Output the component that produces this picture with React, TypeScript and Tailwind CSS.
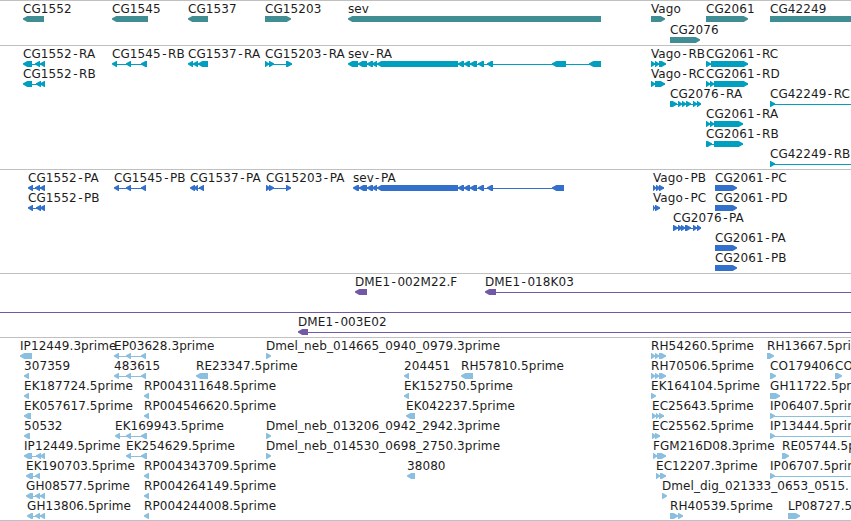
import React from 'react';

type Strand = '<' | '>';
type Exon = [number, number];

interface Feature {
  name?: string;
  row: number;
  strand: Strand;
  exons: Exon[];
  // intron line that runs past the last exon, out of the view
  lineTo?: number;
}

interface Track {
  id: string;
  color: string;
  height: number;
  pitch: number;
  features: Feature[];
}

const VIEW_WIDTH = 851;
const BAR_TOP = 15;
const BAR_HEIGHT = 6;
const HEAD = 5;

const f = (name: string, row: number, strand: Strand, exons: Exon[], lineTo?: number): Feature => ({
  name, row, strand, exons, lineTo,
});

const SEV_TAIL: Exon[] = [[367, 373], [372, 377], [377, 458], [458, 464], [464, 470], [470, 477], [478, 484], [487, 493]];
const CG1545_EST: Exon[] = [[114, 119], [126, 131], [141, 146]];

const TRACKS: Track[] = [
  {
    id: 'genes',
    color: '#408e94',
    height: 45,
    pitch: 21,
    features: [
      f('CG1552', 0, '<', [[23, 44]]),
      f('CG1545', 0, '<', [[112, 148]]),
      f('CG1537', 0, '<', [[188, 208]]),
      f('CG15203', 0, '>', [[265, 291]]),
      f('sev', 0, '<', [[348, 601]]),
      f('Vago', 0, '>', [[651, 665]]),
      f('CG2061', 0, '>', [[706, 748]]),
      f('CG42249', 0, '>', [[770, 870]]),
      f('CG2076', 1, '>', [[670, 700]]),
    ],
  },
  {
    id: 'transcripts',
    color: '#009fc0',
    height: 124,
    pitch: 20,
    features: [
      f('CG1552-RA', 0, '<', [[23, 32], [35, 40], [40, 45]]),
      f('CG1545-RB', 0, '<', [[112, 117], [126, 131], [141, 147]]),
      f('CG1537-RA', 0, '<', [[188, 193], [193, 198], [198, 208]]),
      f('CG15203-RA', 0, '>', [[265, 269], [269, 274], [286, 292]]),
      f('sev-RA', 0, '<', [[348, 358], [358, 367], ...SEV_TAIL, [552, 566], [589, 601]]),
      f('Vago-RB', 0, '>', [[651, 655], [655, 659], [659, 666]]),
      f('CG2061-RC', 0, '>', [[706, 711], [711, 748]]),
      f('CG1552-RB', 1, '<', [[23, 32], [36, 41], [40, 45]]),
      f('Vago-RC', 1, '>', [[651, 655], [655, 665]]),
      f('CG2061-RD', 1, '>', [[706, 710], [710, 714], [714, 748]]),
      f('CG2076-RA', 2, '>', [[670, 677], [678, 682], [682, 686], [686, 691], [693, 697], [697, 701]]),
      f('CG42249-RC', 2, '>', [[770, 775]], VIEW_WIDTH),
      f('CG2061-RA', 3, '>', [[706, 710], [710, 714], [714, 743]]),
      f('CG2061-RB', 4, '>', [[706, 712], [714, 743]]),
      f('CG42249-RB', 5, '>', [[770, 775]], VIEW_WIDTH),
    ],
  },
  {
    id: 'proteins',
    color: '#3370cc',
    height: 104,
    pitch: 20,
    features: [
      f('CG1552-PA', 0, '<', [[28, 33], [35, 40], [40, 45]]),
      f('CG1545-PB', 0, '<', [[114, 119], [126, 131], [141, 146]]),
      f('CG1537-PA', 0, '<', [[190, 195], [194, 198], [199, 204]]),
      f('CG15203-PA', 0, '>', [[266, 270], [269, 274], [286, 291]]),
      f('sev-PA', 0, '<', [[353, 359], [359, 367], ...SEV_TAIL, [552, 564]]),
      f('Vago-PB', 0, '>', [[653, 656], [656, 660], [659, 664]]),
      f('CG2061-PC', 0, '>', [[715, 737]]),
      f('CG1552-PB', 1, '<', [[28, 33], [36, 41], [40, 45]]),
      f('Vago-PC', 1, '>', [[653, 655], [655, 660]]),
      f('CG2061-PD', 1, '>', [[715, 737]]),
      f('CG2076-PA', 2, '>', [[673, 678], [678, 682], [681, 685], [685, 691], [693, 697], [697, 701]]),
      f('CG2061-PA', 3, '>', [[715, 737]]),
      f('CG2061-PB', 4, '>', [[715, 737]]),
    ],
  },
  {
    id: 'bac-ends',
    color: '#7259a6',
    height: 64,
    pitch: 20,
    features: [
      f('DME1-002M22.F', 0, '<', [[355, 367]]),
      f('DME1-018K03', 0, '<', [[485, 496]], VIEW_WIDTH),
      { row: 1, strand: '<', exons: [[-20, -10]], lineTo: VIEW_WIDTH },
      f('DME1-003E02', 2, '<', [[298, 308]], VIEW_WIDTH),
    ],
  },
  {
    id: 'ests',
    color: '#8abfdf',
    height: 183,
    pitch: 20,
    features: [
      f('IP12449.3prime', 0, '<', [[20, 32]]),
      f('EP03628.3prime', 0, '<', CG1545_EST),
      f('Dmel_neb_014665_0940_0979.3prime', 0, '>', [[266, 271]]),
      f('RH54260.5prime', 0, '>', [[651, 655], [655, 659], [659, 666]]),
      f('RH13667.5prime', 0, '>', [[767, 774]]),
      f('307359', 1, '<', [[24, 29]]),
      f('483615', 1, '<', CG1545_EST),
      f('RE23347.5prime', 1, '<', [[196, 208]]),
      f('204451', 1, '<', [[404, 409]]),
      f('RH57810.5prime', 1, '<', [[461, 473]]),
      f('RH70506.5prime', 1, '>', [[651, 655], [655, 659], [659, 666]]),
      f('CO179406', 1, '>', [[770, 776]]),
      f('CO', 1, '>', [[835, 842]]),
      f('EK187724.5prime', 2, '<', [[24, 29]]),
      f('RP004311648.5prime', 2, '<', [[144, 149]]),
      f('EK152750.5prime', 2, '<', [[404, 409]]),
      f('EK164104.5prime', 2, '>', [[651, 656]]),
      f('GH11722.5prime', 2, '>', [[770, 780]]),
      f('EK057617.5prime', 3, '<', [[24, 31]]),
      f('RP004546620.5prime', 3, '<', [[144, 149]]),
      f('EK042237.5prime', 3, '<', [[406, 415]]),
      f('EC25643.5prime', 3, '>', [[652, 656], [656, 659], [659, 664]]),
      f('IP06407.5prime', 3, '>', [[770, 775]], VIEW_WIDTH),
      f('50532', 4, '<', [[24, 30]]),
      f('EK169943.5prime', 4, '<', [[115, 120], [126, 131], [141, 147]]),
      f('Dmel_neb_013206_0942_2942.3prime', 4, '>', [[266, 271]]),
      f('EC25562.5prime', 4, '>', [[652, 656], [655, 660]]),
      f('IP13444.5prime', 4, '>', [[770, 775]], VIEW_WIDTH),
      f('IP12449.5prime', 5, '<', [[24, 32], [36, 41], [40, 45]]),
      f('EK254629.5prime', 5, '<', [[126, 131], [141, 147]]),
      f('Dmel_neb_014530_0698_2750.3prime', 5, '>', [[266, 271]]),
      f('FGM216D08.3prime', 5, '>', [[653, 657], [657, 666]]),
      f('RE05744.5prime', 5, '>', [[782, 789]]),
      f('EK190703.5prime', 6, '<', [[26, 33], [35, 40]]),
      f('RP004343709.5prime', 6, '<', [[144, 149]]),
      f('38080', 6, '<', [[407, 415]]),
      f('EC12207.3prime', 6, '>', [[656, 660], [660, 666]]),
      f('IP06707.5prime', 6, '>', [[770, 775]], VIEW_WIDTH),
      f('GH08577.5prime', 7, '<', [[26, 33], [35, 40], [40, 45]]),
      f('RP004264149.5prime', 7, '<', [[144, 149]]),
      f('Dmel_dig_021333_0653_0515.', 7, '>', [[662, 667]]),
      f('GH13806.5prime', 8, '<', [[27, 33], [35, 40], [40, 45]]),
      f('RP004244008.5prime', 8, '<', [[144, 149]]),
      f('RH40539.5prime', 8, '>', [[670, 678], [678, 683]]),
      f('LP08727.5prime', 8, '>', [[788, 800]]),
    ],
  },
];

// Block with a rounded point on the side the strand reads towards
const exonPoints = ([start, end]: Exon, strand: Strand, top: number) => {
  const head = Math.min(HEAD, end - start);
  const [tip, back, dir] = strand === '<' ? [start, end, 1] : [end, start, -1];
  const bottom = top + BAR_HEIGHT;
  return [
    [tip, top + 2.3],
    [tip + dir * head * 0.5, top + 0.9],
    [tip + dir * head * 0.85, top],
    [back, top],
    [back, bottom],
    [tip + dir * head * 0.85, bottom],
    [tip + dir * head * 0.5, bottom - 1.1],
    [tip, top + 3.5],
  ].map((p) => p.join(',')).join(' ');
};

const FeatureGlyph: React.FC<{ feature: Feature; pitch: number }> = ({ feature, pitch }) => {
  const { name, row, strand, exons, lineTo } = feature;
  const top = BAR_TOP + row * pitch;
  const start = exons[0][0];
  const end = lineTo ?? exons[exons.length - 1][1];
  const hasLine = exons.length > 1 || lineTo !== undefined;
  // hyphens get a little air on both sides
  const dx = name?.split('').map((_, i) => (name[i] === '-' || name[i - 1] === '-' ? 1.4 : 0)).join(' ');

  return (
    <g>
      {hasLine && <rect x={start + 2} y={top + 3} width={end - start - 2} height={1} />}
      {exons.map((exon) => (
        <polygon key={exon[0]} points={exonPoints(exon, strand, top)} />
      ))}
      {name && (
        <text x={start} y={top - 3} dx={name.includes('-') ? dx : undefined} className="fill-[#1c1c1c]">
          {name}
        </text>
      )}
    </g>
  );
};

const TrackPanel: React.FC<{ track: Track }> = ({ track }) => (
  <section className="border-t border-[#c0c0c0]">
    <svg
      width={VIEW_WIDTH}
      height={track.height - 1}
      fill={track.color}
      className="block overflow-hidden font-['DejaVu_Sans',sans-serif] text-[12px] tracking-[0.08px]"
    >
      {track.features.map((feature, i) => (
        <FeatureGlyph key={i} feature={feature} pitch={track.pitch} />
      ))}
    </svg>
  </section>
);

const App: React.FC = () => (
  <main className="w-[851px] overflow-hidden border-b border-[#c0c0c0] bg-white">
    {TRACKS.map((track) => (
      <TrackPanel key={track.id} track={track} />
    ))}
  </main>
);

export default App;
